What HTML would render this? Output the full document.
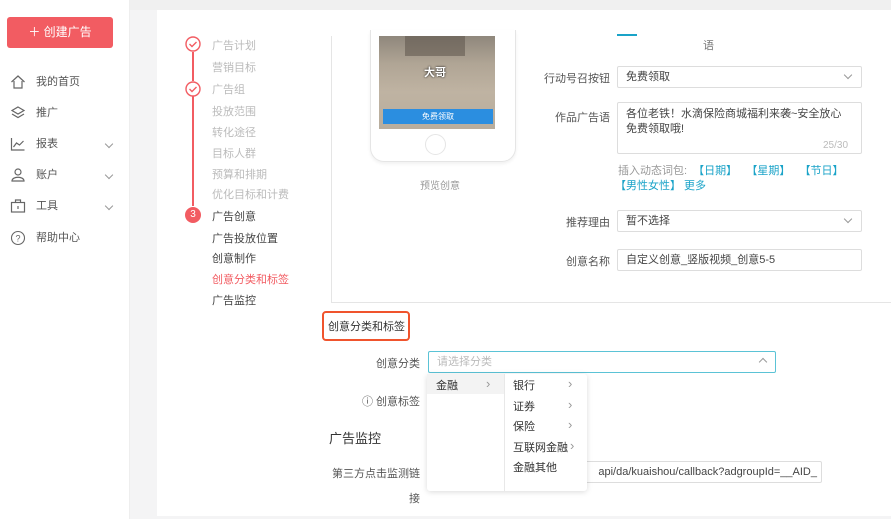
<!DOCTYPE html>
<html><head><meta charset="utf-8"><style>
*{margin:0;padding:0;box-sizing:border-box}
body{width:891px;height:519px;overflow:hidden;background:#f4f4f5;font-family:"Liberation Sans","Noto Sans CJK SC",sans-serif;font-size:11px;color:#555;position:relative}
.a{position:absolute}
.side{left:0;top:0;width:130px;height:519px;background:#fff;border-right:1px solid #eee}
.btn{left:7px;top:17px;width:106px;height:31px;background:#f25c62;border-radius:3px;color:#fff;font-size:12px;text-align:center;line-height:31px}
.nav{left:10px;font-size:11px;color:#555;width:100px;height:16px}
.nav svg{position:absolute;left:0;top:0}
.nav span{position:absolute;left:26px;top:1px;white-space:nowrap;line-height:14px}
.chev{width:6px;height:6px;border-right:1px solid #999;border-bottom:1px solid #999;transform:rotate(45deg)}
.card{left:157px;top:10px;width:734px;height:506px;background:#fff}
.step{left:212px;font-size:11px;color:#bbb;white-space:nowrap}
.dark{color:#444}
.inp{border:1px solid #ddd;border-radius:2px;background:#fff;font-size:11px;color:#444;padding-left:8px}
.lbl{font-size:11px;color:#555;text-align:right;white-space:nowrap}
.blue{color:#1aa3c8}
.ar{color:#999;font-size:13px;line-height:14px}
</style></head><body>
<div class="a" style="left:0;top:0;width:891px;height:10px;background:#f0f0f0"></div>
<div class="a side"></div>
<div class="a btn">＋ 创建广告</div>
<div class="a nav" style="top:74px"><svg width="16" height="16" viewBox="0 0 16 16"><path d="M1.5 8L8 2l6.5 6M4 7v7h8V7" fill="none" stroke="#666" stroke-width="1.2"/></svg><span>我的首页</span></div>
<div class="a nav" style="top:105px"><svg width="16" height="16" viewBox="0 0 16 16"><path d="M8 2l6 3.5-6 3.5-6-3.5zM2 9l6 3.5L14 9" fill="none" stroke="#666" stroke-width="1.2"/></svg><span>推广</span></div>
<div class="a nav" style="top:136px"><svg width="16" height="16" viewBox="0 0 16 16"><path d="M1.5 2v12h13M3.5 11l3-4 3 2 4-4" fill="none" stroke="#666" stroke-width="1.2"/></svg><span>报表</span></div>
<div class="a nav" style="top:167px"><svg width="16" height="16" viewBox="0 0 16 16"><circle cx="8" cy="5" r="3" fill="none" stroke="#666" stroke-width="1.2"/><path d="M2 14c0-5 12-5 12 0z" fill="none" stroke="#666" stroke-width="1.2"/></svg><span>账户</span></div>
<div class="a nav" style="top:198px"><svg width="16" height="16" viewBox="0 0 16 16"><rect x="1.5" y="4.5" width="13" height="9.5" fill="none" stroke="#666" stroke-width="1.2"/><path d="M5.5 4.5V2h5v2.5M8 8v3" fill="none" stroke="#666" stroke-width="1.2"/></svg><span>工具</span></div>
<div class="a nav" style="top:230px"><svg width="16" height="16" viewBox="0 0 16 16"><circle cx="8" cy="8" r="6.5" fill="none" stroke="#666" stroke-width="1.1"/><text x="8" y="11.5" font-size="9" text-anchor="middle" fill="#666">?</text></svg><span>帮助中心</span></div>
<div class="a chev" style="left:106px;top:141px"></div>
<div class="a chev" style="left:106px;top:172px"></div>
<div class="a chev" style="left:106px;top:203px"></div>

<div class="a card"></div>
<div class="a" style="left:192px;top:52px;width:2px;height:29px;background:#f25c62"></div>
<div class="a" style="left:192px;top:96px;width:2px;height:110px;background:#f25c62"></div>
<svg class="a" style="left:185px;top:36px" width="16" height="16"><circle cx="8" cy="8" r="7" fill="#fff" stroke="#f25c62" stroke-width="1.4"/><path d="M4.5 8l2.5 2.5 4.5-4.5" fill="none" stroke="#f25c62" stroke-width="1.4"/></svg>
<svg class="a" style="left:185px;top:81px" width="16" height="16"><circle cx="8" cy="8" r="7" fill="#fff" stroke="#f25c62" stroke-width="1.4"/><path d="M4.5 8l2.5 2.5 4.5-4.5" fill="none" stroke="#f25c62" stroke-width="1.4"/></svg>
<div class="a" style="left:185px;top:207px;width:16px;height:16px;border-radius:8px;background:#f25c62;color:#fff;font-size:10px;text-align:center;line-height:16px">3</div>
<div class="a step" style="top:37px">广告计划</div>
<div class="a step" style="top:59px">营销目标</div>
<div class="a step" style="top:81px">广告组</div>
<div class="a step" style="top:103px">投放范围</div>
<div class="a step" style="top:124px">转化途径</div>
<div class="a step" style="top:145px">目标人群</div>
<div class="a step" style="top:166px">预算和排期</div>
<div class="a step" style="top:186px">优化目标和计费</div>
<div class="a step dark" style="top:208px">广告创意</div>
<div class="a step dark" style="top:230px">广告投放位置</div>
<div class="a step dark" style="top:250px">创意制作</div>
<div class="a step" style="top:271px;color:#f25c62">创意分类和标签</div>
<div class="a step dark" style="top:292px">广告监控</div>

<div class="a" style="left:331px;top:36px;width:560px;height:267px;border-left:1px solid #e5e5e5;border-bottom:1px solid #e5e5e5"></div>
<div class="a" style="left:370px;top:30px;width:146px;height:132px;border:1px solid #e5e5e5;border-top:none;border-radius:0 0 14px 14px;box-shadow:0 2px 3px rgba(0,0,0,.06)"></div>
<div class="a" style="left:379px;top:36px;width:116px;height:93px;background:linear-gradient(180deg,#8f877c 0%,#b0a595 30%,#bfb3a2 60%,#b8ad9d 100%)"></div>
<div class="a" style="left:405px;top:36px;width:60px;height:20px;background:#5c534b;opacity:.55"></div>
<div class="a" style="left:424px;top:64px;color:#fff;font-size:11px;font-weight:bold;text-shadow:0 0 2px #000">大哥</div>
<div class="a" style="left:383px;top:109px;width:110px;height:15px;background:#2b8ee0;color:#fff;font-size:8px;text-align:center;line-height:15px">免费领取</div>
<div class="a" style="left:425px;top:134px;width:21px;height:21px;border:1px solid #e5e5e5;border-radius:50%"></div>
<div class="a" style="left:420px;top:177px;color:#999;font-size:10px">预览创意</div>

<div class="a" style="left:617px;top:34px;width:20px;height:2px;background:#1aa3c8"></div>
<div class="a" style="left:703px;top:37px;font-size:11px;color:#777">语</div>
<div class="a lbl" style="left:520px;top:70px;width:90px">行动号召按钮</div>
<div class="a inp" style="left:617px;top:66px;width:245px;height:22px;line-height:20px">免费领取</div>
<div class="a lbl" style="left:520px;top:109px;width:90px">作品广告语</div>
<div class="a inp" style="left:617px;top:102px;width:245px;height:52px;padding-top:4px;padding-right:12px;line-height:15px">各位老铁！水滴保险商城福利来袭~安全放心免费领取哦!</div>
<div class="a" style="left:823px;top:140px;font-size:10px;color:#bbb">25/30</div>
<div class="a" style="left:618px;top:162px;font-size:11px;color:#999">插入动态词包: <span class="blue">&nbsp;【日期】&nbsp;&nbsp;&nbsp;【星期】&nbsp;&nbsp;&nbsp;【节日】</span></div>
<div class="a blue" style="left:615px;top:177px;font-size:11px">【男性女性】 更多</div>
<div class="a lbl" style="left:520px;top:214px;width:90px">推荐理由</div>
<div class="a inp" style="left:617px;top:210px;width:245px;height:22px;line-height:20px">暂不选择</div>
<div class="a chev" style="left:845px;top:72px"></div>
<div class="a chev" style="left:845px;top:216px"></div>
<div class="a lbl" style="left:520px;top:253px;width:90px">创意名称</div>
<div class="a inp" style="left:617px;top:249px;width:245px;height:22px;line-height:20px">自定义创意_竖版视频_创意5-5</div>

<div class="a" style="left:322px;top:311px;width:88px;height:30px;border:2px solid #f0542d;border-radius:4px"></div>
<div class="a" style="left:328px;top:318px;font-size:11px;color:#333">创意分类和标签</div>
<div class="a lbl" style="left:340px;top:355px;width:80px">创意分类</div>
<div class="a" style="left:428px;top:351px;width:348px;height:22px;border:1px solid #5bc3d6;border-radius:2px;padding-left:8px;line-height:20px;color:#bbb;font-size:11px">请选择分类</div>
<div class="a" style="left:760px;top:359px;width:6px;height:6px;border-left:1px solid #999;border-top:1px solid #999;transform:rotate(45deg)"></div>
<div class="a lbl" style="left:340px;top:393px;width:80px">ⓘ 创意标签</div>
<div class="a" style="left:329px;top:428px;font-size:13px;color:#333">广告监控</div>
<div class="a lbl" style="left:320px;top:465px;width:100px">第三方点击监测链</div>
<div class="a lbl" style="left:320px;top:490px;width:100px">接</div>
<div class="a inp" style="left:430px;top:461px;width:392px;height:22px;line-height:20px;text-align:right;padding-right:4px">api/da/kuaishou/callback?adgroupId=__AID_</div>

<div class="a" style="left:427px;top:374px;width:160px;height:117px;background:#fff;border-radius:3px;box-shadow:0 1px 6px rgba(0,0,0,.15)"></div>
<div class="a" style="left:427px;top:374px;width:77px;height:20px;background:#f3f3f3"></div>
<div class="a" style="left:504px;top:374px;width:1px;height:117px;background:#e8e8e8"></div>
<div class="a" style="left:436px;top:377px;font-size:11px;color:#333">金融</div>
<div class="a ar" style="left:486px;top:377px">›</div>
<div class="a" style="left:513px;top:377px;color:#333">银行</div>
<div class="a" style="left:513px;top:398px;color:#333">证券</div>
<div class="a" style="left:513px;top:418px;color:#333">保险</div>
<div class="a" style="left:513px;top:439px;color:#333">互联网金融</div>
<div class="a" style="left:513px;top:459px;color:#333">金融其他</div>
<div class="a ar" style="left:568px;top:377px">›</div>
<div class="a ar" style="left:568px;top:398px">›</div>
<div class="a ar" style="left:568px;top:418px">›</div>
<div class="a ar" style="left:570px;top:439px">›</div>
</body></html>
